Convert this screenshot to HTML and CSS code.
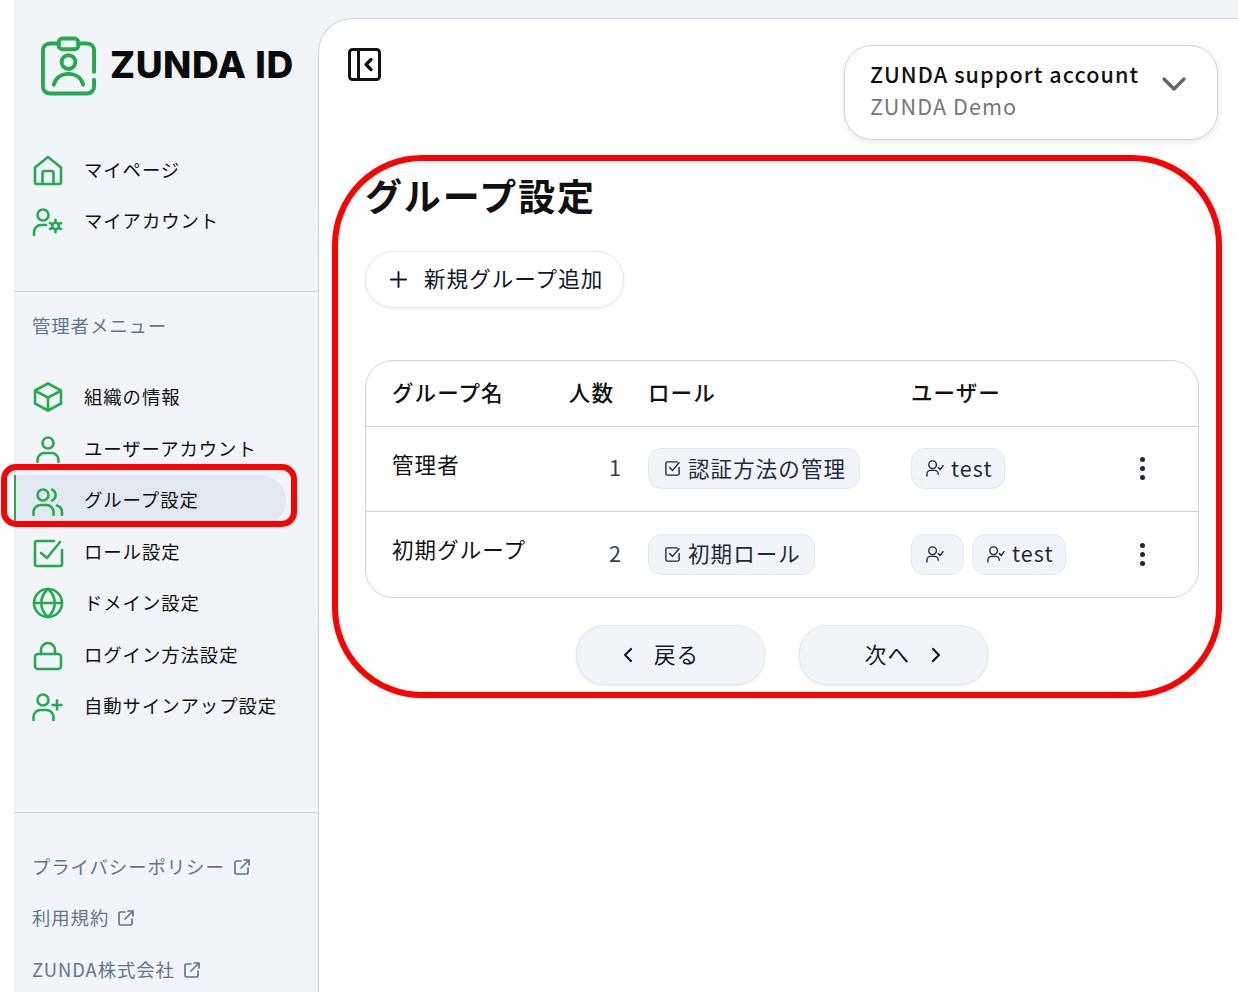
FILE: index.html
```html
<!DOCTYPE html>
<html lang="ja">
<head>
<meta charset="utf-8">
<title>グループ設定</title>
<link rel="stylesheet" href="styles.css">
</head>
<body>
<div class="shell">
  <aside class="sidebar">
    <div class="logo">
      <svg class="logo-icon" viewBox="0 0 56 60" fill="none" stroke="#27a94f" stroke-width="4" stroke-linecap="round" stroke-linejoin="round">
        <path d="M18 7H9a7 7 0 0 0-7 7v37a7 7 0 0 0 7 7h38a7 7 0 0 0 7-7v-7M54 36V14a7 7 0 0 0-7-7h-9"/>
        <rect x="18" y="2" width="20" height="11" rx="4"/>
        <circle cx="28" cy="26" r="7"/>
        <path d="M13 49c2-7 8-11 15-11s13 4 15 11"/>
      </svg>
      <span class="logo-text">ZUNDA ID</span>
    </div>
    <nav class="nav nav-top">
      <a class="item"><svg class="ico" viewBox="0 0 32 32"><path d="M3 13.500 16 3l13 10.500V28a2 2 0 0 1-2 2H5a2 2 0 0 1-2-2z"/><path d="M10.500 30V19a2 2 0 0 1 2-2h7a2 2 0 0 1 2 2v11"/></svg><span>マイページ</span></a>
      <a class="item"><svg class="ico" viewBox="0 0 32 32"><circle cx="11" cy="10" r="5.500"/><path d="M2 30v-3a7 7 0 0 1 7-7h5"/><circle cx="23.500" cy="21" r="3.300"/><path d="M23.500 14.800v2.500M23.500 24.700v2.500M18 18l2.300 1.200M26.700 22.800l2.300 1.200M18 24l2.300-1.200M26.700 19.200l2.300-1.200"/></svg><span>マイアカウント</span></a>
    </nav>
    <div class="rule"></div>
    <div class="nav-label">管理者メニュー</div>
    <nav class="nav">
      <a class="item"><svg class="ico" viewBox="0 0 32 32"><path d="M16 2.500 29 9.500v13l-13 7-13-7v-13z"/><path d="M3.500 10 16 16.500 28.500 10M16 16.500V29"/></svg><span>組織の情報</span></a>
      <a class="item"><svg class="ico" viewBox="0 0 32 32"><circle cx="16" cy="10" r="5.500"/><path d="M5.500 29v-2a7 7 0 0 1 7-7h7a7 7 0 0 1 7 7v2"/></svg><span>ユーザーアカウント</span></a>
      <a class="item active"><svg class="ico" viewBox="0 0 32 32"><circle cx="11" cy="11" r="5.500"/><path d="M1.500 31v-3a7 7 0 0 1 7-7h6a7 7 0 0 1 7 7v3M20 5.500a6 6 0 0 1 0 11M25 21.500a7 7 0 0 1 5 6.500v3"/></svg><span>グループ設定</span></a>
      <a class="item"><svg class="ico" viewBox="0 0 32 32"><path d="M22 5H5a2 2 0 0 0-2 2v21a2 2 0 0 0 2 2h23a2 2 0 0 0 2-2V14"/><path d="m9 17 6 5L28 6"/></svg><span>ロール設定</span></a>
      <a class="item"><svg class="ico" viewBox="0 0 32 32"><circle cx="16" cy="16" r="14"/><path d="M2 16h28M16 2c-9 8-9 20 0 28M16 2c9 8 9 20 0 28"/></svg><span>ドメイン設定</span></a>
      <a class="item"><svg class="ico" viewBox="0 0 32 32"><rect x="3" y="15" width="26" height="15" rx="3"/><path d="M9 15v-4a7 7 0 0 1 14 0v4"/></svg><span>ログイン方法設定</span></a>
      <a class="item"><svg class="ico" viewBox="0 0 32 32"><circle cx="11" cy="10" r="5.500"/><path d="M1.500 30v-3a7 7 0 0 1 7-7h6a7 7 0 0 1 7 7v3M25 10.500v9M20.500 15h9"/></svg><span>自動サインアップ設定</span></a>
    </nav>
    <div class="rule rule-bottom"></div>
    <nav class="nav foot">
      <a class="item foot-item"><span>プライバシーポリシー</span><svg class="ext" viewBox="0 0 18 18"><path d="M8 3H3.500A1.500 1.500 0 0 0 2 4.500v10A1.500 1.500 0 0 0 3.500 16h10a1.500 1.500 0 0 0 1.500-1.500V10M8 10l8-8M11 2h5v5"/></svg></a>
      <a class="item foot-item"><span>利用規約</span><svg class="ext" viewBox="0 0 18 18"><path d="M8 3H3.500A1.500 1.500 0 0 0 2 4.500v10A1.500 1.500 0 0 0 3.500 16h10a1.500 1.500 0 0 0 1.500-1.500V10M8 10l8-8M11 2h5v5"/></svg></a>
      <a class="item foot-item"><span>ZUNDA株式会社</span><svg class="ext" viewBox="0 0 18 18"><path d="M8 3H3.500A1.500 1.500 0 0 0 2 4.500v10A1.500 1.500 0 0 0 3.500 16h10a1.500 1.500 0 0 0 1.500-1.500V10M8 10l8-8M11 2h5v5"/></svg></a>
    </nav>
  </aside>

  <main class="main">
    <header class="top">
      <svg class="collapse" viewBox="0 0 33 33" fill="none" stroke="#111" stroke-width="3" stroke-linecap="round" stroke-linejoin="round"><rect x="1.500" y="1.500" width="30" height="30" rx="3"/><path d="M10.500 2v29"/><path d="m23 11.500-5 5 5 5" stroke-width="3.200"/></svg>
      <div class="account">
        <div class="account-text">
          <div class="account-name">ZUNDA support account</div>
          <div class="account-org">ZUNDA Demo</div>
        </div>
        <svg class="chev" viewBox="0 0 24 14" fill="none" stroke="#666" stroke-width="3.300" stroke-linecap="round" stroke-linejoin="round"><path d="m2 2 10 10L22 2"/></svg>
      </div>
    </header>
    <section class="content">
      <h1 class="title">グループ設定</h1>
      <button class="add"><svg class="plus" viewBox="0 0 20 20" fill="none" stroke="#0f172a" stroke-width="2" stroke-linecap="round"><path d="M10 2v16M2 10h16"/></svg><span>新規グループ追加</span></button>

      <div class="table">
        <div class="row head">
          <div class="name-head">グループ名</div>
          <div class="count-head">人数</div>
          <div class="cell">ロール</div>
          <div class="cell">ユーザー</div>
          <div></div>
        </div>
        <div class="row">
          <div class="name">管理者</div>
          <div class="count">1</div>
          <div class="chips">
            <span class="chip"><svg class="chip-ico" viewBox="0 0 18 18"><path d="M14 2H3.500A1.500 1.500 0 0 0 2 3.500v11A1.500 1.500 0 0 0 3.500 16h11a1.500 1.500 0 0 0 1.500-1.500V8"/><path d="m6 8 3 3 7-8"/></svg>認証方法の管理</span>
          </div>
          <div class="chips">
            <span class="chip user"><svg class="chip-ico user-ico" viewBox="0 0 20 20"><circle cx="8" cy="6" r="4"/><path d="M2 18v-2a4 4 0 0 1 4-4h4a4 4 0 0 1 4 4M14 9l2 2 3-4"/></svg>test</span>
          </div>
          <div class="more"><i></i><i></i><i></i></div>
        </div>
        <div class="row">
          <div class="name">初期グループ</div>
          <div class="count">2</div>
          <div class="chips">
            <span class="chip"><svg class="chip-ico" viewBox="0 0 18 18"><path d="M14 2H3.500A1.500 1.500 0 0 0 2 3.500v11A1.500 1.500 0 0 0 3.500 16h11a1.500 1.500 0 0 0 1.500-1.500V8"/><path d="m6 8 3 3 7-8"/></svg>初期ロール</span>
          </div>
          <div class="chips">
            <span class="chip user nameless"><svg class="chip-ico user-ico" viewBox="0 0 20 20"><circle cx="8" cy="6" r="4"/><path d="M2 18v-2a4 4 0 0 1 4-4h4a4 4 0 0 1 4 4M14 9l2 2 3-4"/></svg></span>
            <span class="chip user"><svg class="chip-ico user-ico" viewBox="0 0 20 20"><circle cx="8" cy="6" r="4"/><path d="M2 18v-2a4 4 0 0 1 4-4h4a4 4 0 0 1 4 4M14 9l2 2 3-4"/></svg>test</span>
          </div>
          <div class="more"><i></i><i></i><i></i></div>
        </div>
      </div>

      <div class="pager">
        <button class="page-btn prev"><svg class="page-ico" viewBox="0 0 12 18" fill="none" stroke="#0f172a" stroke-width="2.200" stroke-linecap="round" stroke-linejoin="round"><path d="M9 3 3 9l6 6"/></svg><span>戻る</span></button>
        <button class="page-btn next"><span>次へ</span><svg class="page-ico" viewBox="0 0 12 18" fill="none" stroke="#0f172a" stroke-width="2.200" stroke-linecap="round" stroke-linejoin="round"><path d="m3 3 6 6-6 6"/></svg></button>
      </div>
    </section>
  </main>
</div>
<div class="mark mark-content"></div>
<div class="mark mark-nav"></div>
</body>
</html>
```
FILE: styles.css
```css
* { box-sizing: border-box; }
html, body { margin: 0; height: 992px; overflow: hidden; background: #fff; }
body {
  font-family: "Noto Sans CJK JP", "Noto Sans", sans-serif;
  color: #111;
  position: relative;
}
.shell {
  margin-left: 14px;
  height: 992px;
  display: flex;
  background: #f1f5f9;
}
.sidebar { width: 304px; flex: none; display: flex; flex-direction: column; }
.sidebar > * { flex: none; }
.logo {
  height: 144px;
  padding: 36px 0 0 27px;
  display: flex;
  align-items: flex-start;
  gap: 14px;
}
.logo-icon { width: 55px; height: 60px; flex: none; }
.logo-text {
  font-family: Inter, "Liberation Sans", sans-serif;
  font-weight: 800;
  font-size: 37px;
  line-height: 58px;
  letter-spacing: 0.015em;
  color: #0b0b0b;
  white-space: nowrap;
}
.nav { display: flex; flex-direction: column; }
.item {
  height: 51.5px;
  flex: none;
  display: flex;
  align-items: center;
  gap: 20px;
  padding-left: 18px;
  font-size: 18.400px;
  letter-spacing: 0.05em;
  color: #111;
  white-space: nowrap;
}
.item span { line-height: 1; margin-top: -2px; }
.ico {
  width: 32px;
  height: 32px;
  flex: none;
  fill: none;
  stroke: #27a94f;
  stroke-width: 2.600;
  stroke-linecap: round;
  stroke-linejoin: round;
}
.active {
  width: 272px;
  background: #e2e8f0;
  border-left: 2px solid #27a94f;
  border-radius: 0 26px 26px 0;
  padding-left: 16px;
}
.rule { height: 1px; background: #cbd5e1; margin-top: 44px; }
.rule-bottom { margin-top: 80px; }
.nav-label {
  height: 79.500px;
  padding: 19px 0 0 18px;
  font-size: 18.400px;
  line-height: 29px;
  letter-spacing: 0.05em;
  color: #64748b;
}
.foot { margin-top: 28px; }
.foot-item { color: #64748b; gap: 8px; }
.ext {
  width: 18px;
  height: 18px;
  flex: none;
  fill: none;
  stroke: #64748b;
  stroke-width: 1.700;
  stroke-linecap: round;
  stroke-linejoin: round;
}
.main {
  flex: 1;
  margin-top: 18px;
  background: #fff;
  border-left: 1px solid #cbd5e1;
  border-top: 1px solid #cbd5e1;
  border-top-left-radius: 34px;
  min-width: 0;
}
.top {
  display: flex;
  justify-content: space-between;
  align-items: flex-start;
  padding: 26px 20px 0 29px;
}
.collapse { width: 33px; height: 33px; margin-top: 3px; flex: none; }
.account {
  width: 374px;
  height: 95px;
  border: 1.500px solid #cbd5e1;
  border-radius: 28px;
  background: #fff;
  box-shadow: 0 2px 6px rgba(15, 23, 42, 0.1);
  padding: 0 31px 0 25px;
  display: flex;
  align-items: center;
  justify-content: space-between;
}
.account-text { padding-bottom: 5px; }
.account-name { font-size: 21.600px; line-height: 31px; font-weight: 500; letter-spacing: 0.05em; color: #111; white-space: nowrap; }
.account-org { font-size: 21.600px; line-height: 33px; letter-spacing: 0.05em; color: #777; white-space: nowrap; }
.chev { width: 24px; height: 14px; margin-bottom: 17px; flex: none; }
.content { padding: 30px 39px 0 46px; }
.title {
  margin: 0 0 4px;
  font-size: 37px;
  line-height: 50px;
  font-weight: 700;
  letter-spacing: 0.05em;
  color: #111;
}
.add {
  margin-top: 31px;
  width: 259px;
  height: 57px;
  border: 1.500px solid #e2e8f0;
  border-radius: 28px;
  background: #fff;
  box-shadow: 0 1px 3px rgba(15, 23, 42, 0.08);
  display: flex;
  align-items: center;
  gap: 16px;
  padding: 0 0 0 23px;
  font: inherit;
  font-size: 21.500px;
  letter-spacing: 0.05em;
  color: #0f172a;
}
.add span { margin-top: -4px; }
.plus { width: 19px; height: 19px; flex: none; }
.table {
  margin-top: 52px;
  border: 1.500px solid #cbd5e1;
  border-radius: 28px;
  overflow: hidden;
}
.row {
  display: grid;
  grid-template-columns: 158px 72px 263px 199px 1fr;
  align-items: center;
  padding-left: 26px;
  height: 85.500px;
  border-top: 1.500px solid #cbd5e1;
  font-size: 21.500px;
  letter-spacing: 0.05em;
  color: #111;
}
.head { height: 64.500px; border-top: 0; padding-bottom: 3px; font-weight: 500; }
.name-head { white-space: nowrap; }
.count-head { margin-right: 8px; text-align: right; }
.cell { margin-left: 26px; }
.name { align-self: start; padding-top: 21px; line-height: 32px; white-space: nowrap; }
.count { text-align: right; color: #334155; padding-bottom: 4px; }
.chips { display: flex; gap: 8px; margin-left: 26px; }
.chip {
  height: 41px;
  display: inline-flex;
  align-items: center;
  gap: 7px;
  padding: 0 13px 3px 15px;
  background: #f1f5f9;
  border: 1.500px solid #e2e8f0;
  border-radius: 13px;
  color: #1e293b;
  white-space: nowrap;
}
.chip.user { padding: 0 11px 3px 13px; }
.chip.user.nameless { padding-right: 19px; }
.chip-ico {
  width: 17px;
  height: 17px;
  flex: none;
  margin-top: 3px;
  fill: none;
  stroke: #1e293b;
  stroke-width: 1.500;
  stroke-linecap: round;
  stroke-linejoin: round;
}
.user-ico { width: 19px; height: 19px; }
.more {
  display: flex;
  flex-direction: column;
  align-items: flex-start;
  gap: 4px;
  padding-left: 56px;
}
.more i { width: 5px; height: 5px; border-radius: 50%; background: #1e293b; }
.pager { margin-top: 27px; display: flex; justify-content: center; gap: 34px; }
.page-btn {
  width: 189px;
  height: 60px;
  background: #f1f5f9;
  border: 1.500px solid #e2e8f0;
  border-radius: 28px;
  box-shadow: 0 1px 3px rgba(15, 23, 42, 0.08);
  display: flex;
  align-items: center;
  gap: 20px;
  font: inherit;
  font-size: 21.500px;
  letter-spacing: 0.05em;
  color: #0f172a;
}
.page-btn span { margin-top: -3px; }
.prev { justify-content: flex-start; padding: 0 0 0 45px; }
.next { justify-content: flex-end; padding: 0 45px 0 0; }
.page-ico { width: 12px; height: 18px; flex: none; }
.mark {
  position: absolute;
  border: 6px solid #f00;
  pointer-events: none;
}
.mark-content { left: 332px; top: 155px; width: 890px; height: 543px; border-radius: 90px; }
.mark-nav { left: 1px; top: 464px; width: 296px; height: 63px; border-radius: 15px; }
```
